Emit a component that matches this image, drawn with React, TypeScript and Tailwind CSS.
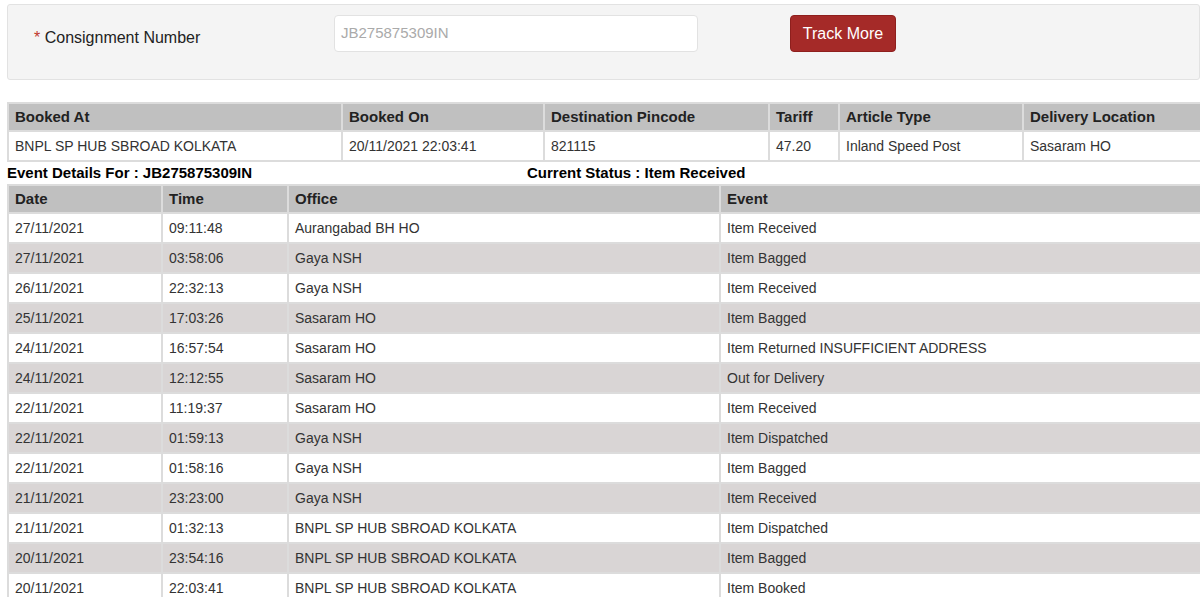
const events = [
  ["27/11/2021","09:11:48","Aurangabad BH HO","Item Received"],
  ["27/11/2021","03:58:06","Gaya NSH","Item Bagged"],
  ["26/11/2021","22:32:13","Gaya NSH","Item Received"],
  ["25/11/2021","17:03:26","Sasaram HO","Item Bagged"],
  ["24/11/2021","16:57:54","Sasaram HO","Item Returned INSUFFICIENT ADDRESS"],
  ["24/11/2021","12:12:55","Sasaram HO","Out for Delivery"],
  ["22/11/2021","11:19:37","Sasaram HO","Item Received"],
  ["22/11/2021","01:59:13","Gaya NSH","Item Dispatched"],
  ["22/11/2021","01:58:16","Gaya NSH","Item Bagged"],
  ["21/11/2021","23:23:00","Gaya NSH","Item Received"],
  ["21/11/2021","01:32:13","BNPL SP HUB SBROAD KOLKATA","Item Dispatched"],
  ["20/11/2021","23:54:16","BNPL SP HUB SBROAD KOLKATA","Item Bagged"],
  ["20/11/2021","22:03:41","BNPL SP HUB SBROAD KOLKATA","Item Booked"],
];
const th = "border-2 border-[#dcdcdc] px-[6px] h-[28px] text-left font-bold text-[15px] text-[#222]";
const td = "border-2 border-[#dcdcdc] px-[6px] h-[30px] text-[14px] text-[#333]";
export default function App() {
  return (
    <div className="w-[1200px] h-[597px] overflow-hidden bg-white pl-[7px] pt-[4px]" style={{ fontFamily: '"Liberation Sans", Arial, sans-serif' }}>
      <div className="h-[76px] bg-[#f4f4f4] border border-[#e2e2e2] rounded-[3px] flex items-start pt-[10px]">
        <div className="w-[326px] pl-[26px] pt-[11px] text-[16px] text-[#222]"><span className="text-[#c0392b]">*</span> Consignment Number</div>
        <div className="w-[364px] h-[37px] bg-white border border-[#e2e2e2] rounded-[4px] px-[6px] flex items-center text-[15px] text-[#aaa]">JB275875309IN</div>
        <button className="ml-[92px] w-[106px] h-[37px] bg-[#a52a28] text-white text-[16px] rounded-[4px] border border-[#8e1f1d]">Track More</button>
      </div>
      <table className="mt-[22px] w-[1196px] border-collapse">
        <thead><tr className="bg-[#c0c0c0]">
          <th className={`${th} w-[334px]`}>Booked At</th>
          <th className={`${th} w-[202px]`}>Booked On</th>
          <th className={`${th} w-[225px]`}>Destination Pincode</th>
          <th className={`${th} w-[70px]`}>Tariff</th>
          <th className={`${th} w-[184px]`}>Article Type</th>
          <th className={th}>Delivery Location</th>
        </tr></thead>
        <tbody><tr>
          {["BNPL SP HUB SBROAD KOLKATA","20/11/2021 22:03:41","821115","47.20","Inland Speed Post","Sasaram HO"].map((c,i)=>(<td key={i} className={td}>{c}</td>))}
        </tr></tbody>
      </table>
      <div className="flex h-[22px] items-center text-[15px] font-bold text-black">
        <div className="w-[520px]">Event Details For : JB275875309IN</div>
        <div>Current Status : Item Received</div>
      </div>
      <table className="w-[1196px] border-collapse">
        <thead><tr className="bg-[#c0c0c0]">
          <th className={`${th} w-[154px]`}>Date</th>
          <th className={`${th} w-[126px]`}>Time</th>
          <th className={`${th} w-[432px]`}>Office</th>
          <th className={th}>Event</th>
        </tr></thead>
        <tbody>
          {events.map((r,i)=>(
            <tr key={i} className={i%2 ? "bg-[#d9d5d5]" : "bg-white"}>
              {r.map((c,j)=>(<td key={j} className={td}>{c}</td>))}
            </tr>
          ))}
        </tbody>
      </table>
    </div>
  );
}
